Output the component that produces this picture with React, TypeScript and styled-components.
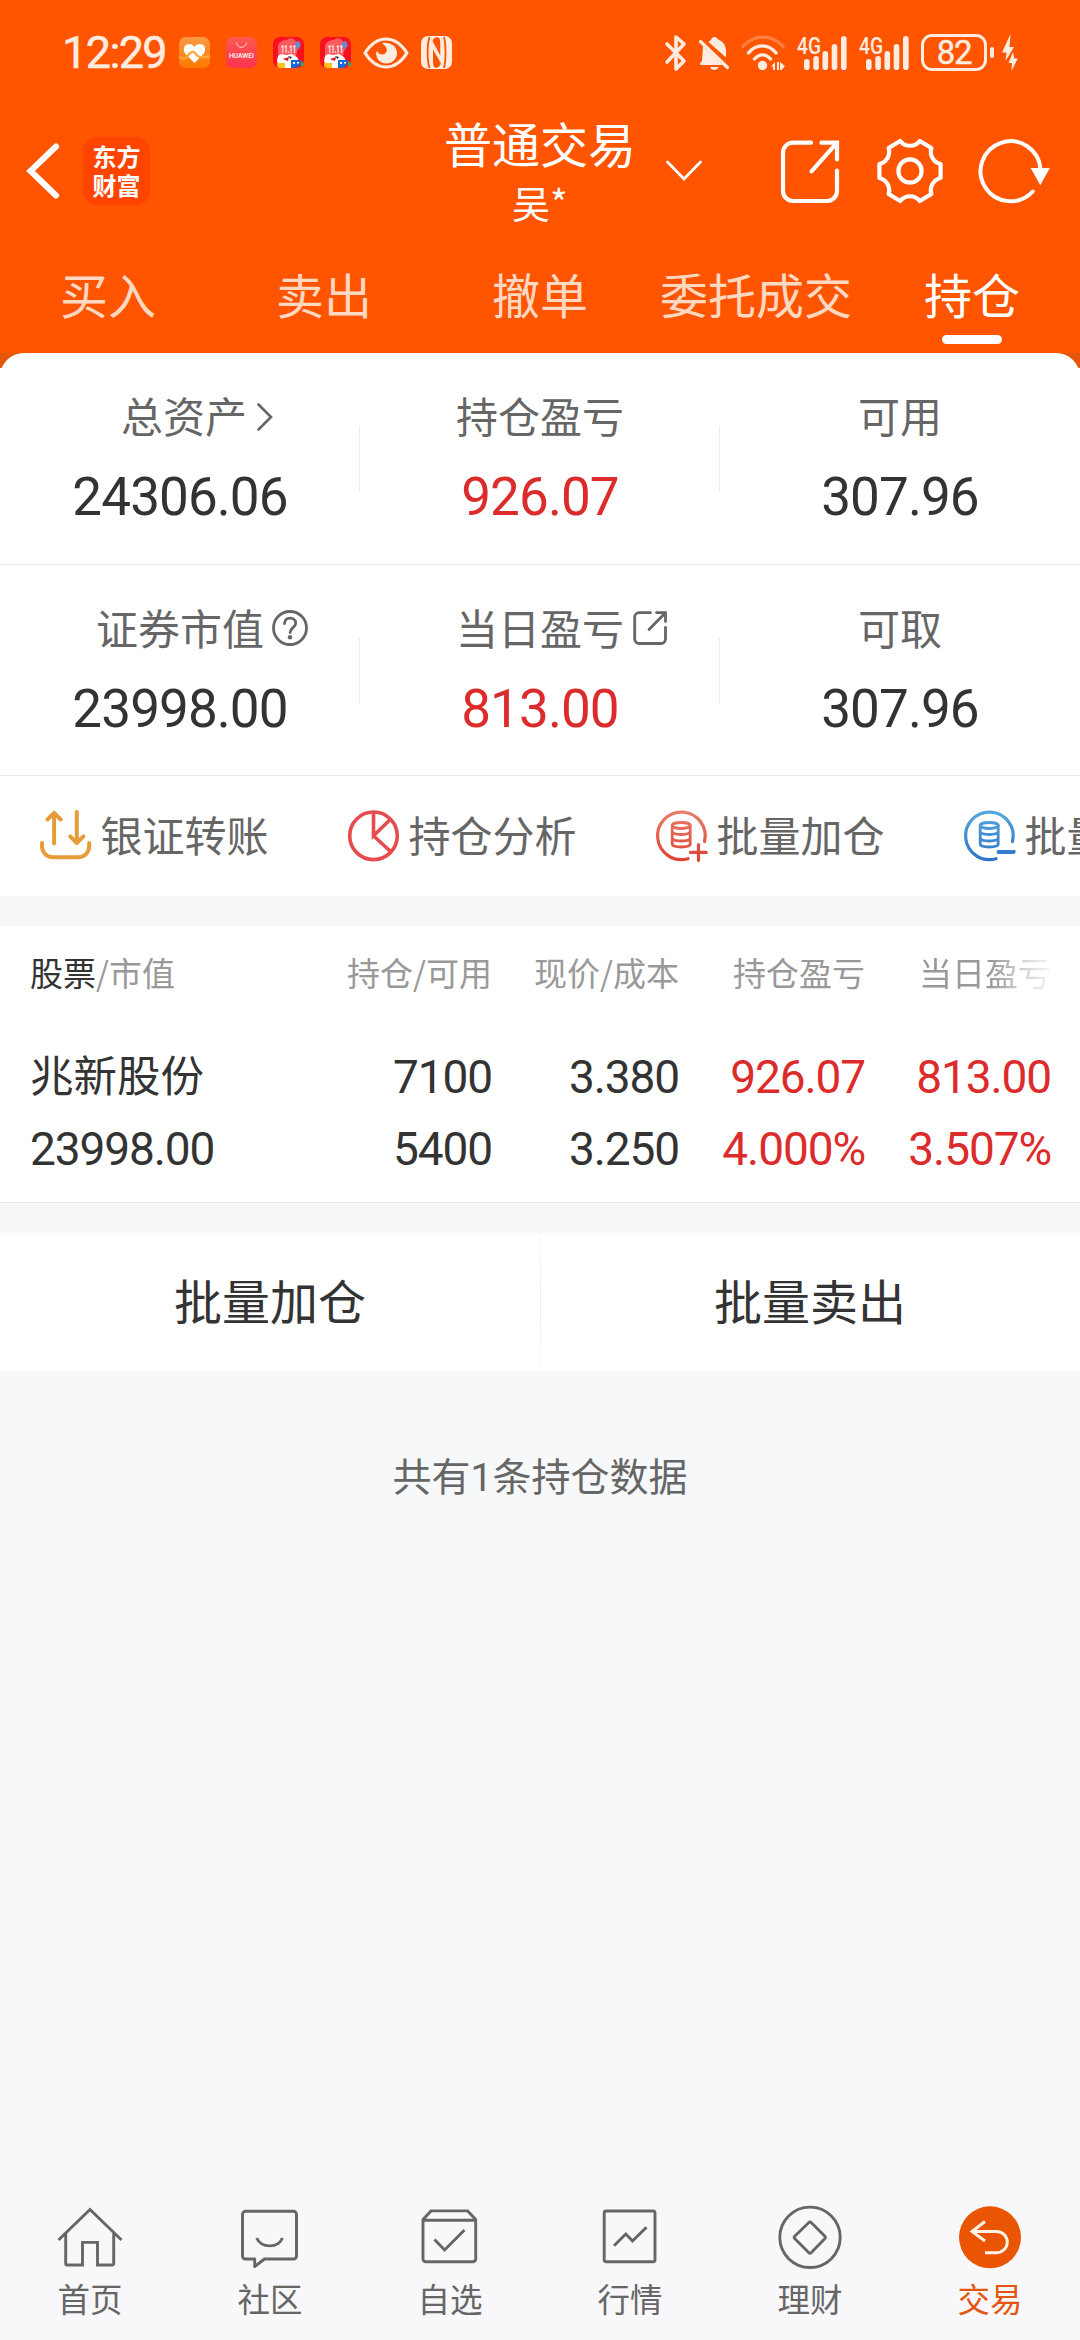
import React from "react";
import styled, { createGlobalStyle } from "styled-components";

const CJK = `"Noto Sans CJK SC", "Noto Sans", sans-serif`;
const NUM = `Roboto, "Noto Sans CJK SC", sans-serif`;
const ORANGE = "#ff5500";
const CREAM = "#ffece0";
const GREY = "#666666";
const DARK = "#333333";
const RED = "#dc2b2b";

const GlobalStyle = createGlobalStyle`
  *, *::before, *::after { box-sizing: border-box; }
  body { margin: 0; background: #f7f8fa; font-family: ${CJK}; }
  svg { display: block; flex: none; overflow: visible; }
`;

const Screen = styled.div`
  display: flex;
  flex-direction: column;
  width: 1080px;
  height: 2340px;
  overflow: hidden;
  background: #f7f8fa;
`;

/* ---------- header ---------- */
const Header = styled.header`
  background: ${ORANGE};
  height: 353px;
`;

const StatusBar = styled.div`
  display: flex;
  align-items: center;
  height: 100px;
  padding: 5px 62px 0;
`;

const Clock = styled.time`
  width: 117px;
  font: 400 45px/50px ${NUM};
  letter-spacing: -1.6px;
  color: ${CREAM};
  -webkit-text-stroke: 0.5px ${CREAM};
`;

const StatusApps = styled.div`
  display: flex;
  gap: 16px;
  margin-right: 12px;
`;

const StatusMarks = styled.div`
  display: flex;
  align-items: center;
  gap: 12px;
`;

const StatusRight = styled.div`
  display: flex;
  align-items: center;
  gap: 12px;
  margin-left: auto;
`;

const Signals = styled.div`
  display: flex;
  gap: 12px;
`;

const BatteryGroup = styled.div`
  display: flex;
  align-items: center;
`;

const BatteryBody = styled.div`
  width: 66px;
  height: 37px;
  border: 3px solid ${CREAM};
  border-radius: 11px;
  font: 400 33px/32px ${NUM};
  letter-spacing: -1.2px;
  text-align: center;
  color: ${CREAM};
  -webkit-text-stroke: 0.4px ${CREAM};
`;

const BatteryNub = styled.div`
  width: 4px;
  height: 11px;
  margin: 0 8px 0 3px;
  border-radius: 2px;
  background: ${CREAM};
`;

const AppBar = styled.div`
  display: grid;
  grid-template-columns: 1fr auto 1fr;
  align-items: center;
  height: 142px;
`;

const AppBarLeft = styled.div`
  display: flex;
  align-items: center;
  padding-left: 25px;
  gap: 22px;
`;

const Brand = styled.div`
  display: grid;
  place-content: center;
  width: 67px;
  height: 68px;
  padding-bottom: 3px;
  border-radius: 14px;
  background: #ff4400;
  color: #fff;
  font: 700 24px/29px ${CJK};
`;

const AccountTitle = styled.div`
  align-self: start;
  padding-top: 12px;
  text-align: center;
  color: #fff;
`;

const TitleText = styled.h1`
  margin: 0 0 5px;
  font: 400 48px/60px ${CJK};
`;

const AccountName = styled.div`
  font: 400 38px/50px ${CJK};
`;

const AppBarRight = styled.div`
  display: flex;
  align-items: center;
  padding-left: 30px;
`;

const ActionIcons = styled.div`
  display: flex;
  gap: 34px;
  margin-left: 75px;
`;

const Tabs = styled.nav`
  display: grid;
  grid-template-columns: repeat(5, 1fr);
`;

const Tab = styled.div<{ $active?: boolean }>`
  display: flex;
  flex-direction: column;
  align-items: center;
  gap: 12px;
  padding-top: 21px;
  font: 400 48px/60px ${CJK};
  color: ${(p) => (p.$active ? "#ffffff" : "#ffd8c2")};
  &::after {
    content: "";
    width: 60px;
    height: 9px;
    border-radius: 5px;
    background: ${(p) => (p.$active ? "#ffffff" : "transparent")};
  }
`;

/* ---------- assets ---------- */
const SheetBack = styled.div`
  background: linear-gradient(#e4560b 0 15px, #ffffff 15px);
`;

const Sheet = styled.section`
  border-radius: 24px 24px 0 0;
  background: #fff;
`;

const AssetRow = styled.div`
  display: grid;
  grid-template-columns: repeat(3, 1fr);
  height: 211.5px;
  border-bottom: 1px solid #ececec;
`;

const AssetCell = styled.div`
  display: flex;
  flex-direction: column;
  align-items: center;
  gap: 24px;
  padding-top: 34px;
  background: linear-gradient(#ececec, #ececec) no-repeat right 0 top 73px / 1px 66px;
  &:last-child { background: none; }
`;

const AssetLabel = styled.div<{ $shift?: number }>`
  display: flex;
  align-items: center;
  margin-left: ${(p) => p.$shift ?? 0}px;
  font: 400 42px/56px ${CJK};
  color: ${GREY};
`;

const HangingIcon = styled.span<{ $w: number; $gap: number }>`
  width: ${(p) => p.$w}px;
  padding-top: 3px;
  margin-left: ${(p) => p.$gap}px;
  margin-right: ${(p) => -(p.$w + p.$gap)}px;
`;

const AssetValue = styled.div<{ $red?: boolean }>`
  font: 400 53px/60px ${NUM};
  letter-spacing: -0.9px;
  color: ${(p) => (p.$red ? RED : DARK)};
`;

const Tools = styled.div`
  display: flex;
  gap: 79.5px;
  height: 120px;
  padding-left: 40px;
  overflow: hidden;
`;

const Tool = styled.div`
  display: flex;
  align-items: center;
  gap: 8.5px;
  flex: none;
`;

const ToolText = styled.span`
  padding-bottom: 5px;
  font: 400 42px/56px ${CJK};
  color: ${GREY};
  white-space: nowrap;
`;

/* ---------- holdings ---------- */
const Holdings = styled.section`
  height: 277px;
  margin-top: 30px;
  padding: 26px 0 0 30px;
  background: #fff;
  border-bottom: 1px solid #e9e9ea;
`;

const GridRow = styled.div`
  display: grid;
  grid-template-columns: 261px 201px 187px 186px 186px;
`;

const HeadRow = styled(GridRow)`
  margin-bottom: 49px;
  font: 400 33px/40px ${CJK};
  color: #999;
`;

const HeadCell = styled.div<{ $left?: boolean; $fade?: boolean }>`
  text-align: ${(p) => (p.$left ? "left" : "right")};
  white-space: nowrap;
  ${(p) => p.$fade && "mask-image: linear-gradient(to right, #000 68%, rgba(0,0,0,0.5) 82%, rgba(0,0,0,0.1) 100%);"}
`;

const HeadStrong = styled.span`
  color: ${DARK};
`;

const DataCell = styled.div<{ $left?: boolean; $red?: boolean }>`
  text-align: ${(p) => (p.$left ? "left" : "right")};
  font: 400 46px/72px ${NUM};
  letter-spacing: -1.1px;
  color: ${(p) => (p.$red ? RED : DARK)};
`;

const StockName = styled.div`
  margin-bottom: 6px;
  font: 400 43.5px/66px ${CJK};
  letter-spacing: 0;
`;

const BatchBar = styled.div`
  display: grid;
  grid-template-columns: 1fr 1fr;
  height: 138px;
  margin-top: 30px;
  background: linear-gradient(#fafafa, #ededed 50%, #fafafa) no-repeat center / 1px 100%, #fff;
`;

const BatchButton = styled.button`
  padding: 0 0 7px;
  border: 0;
  background: none;
  font: 400 48px/60px ${CJK};
  color: ${DARK};
`;

const Summary = styled.p`
  margin: 81px 0 0;
  text-align: center;
  font: 400 39px/52px ${NUM};
  color: ${GREY};
`;

/* ---------- bottom navigation ---------- */
const BottomNav = styled.nav`
  display: grid;
  grid-template-columns: repeat(6, 1fr);
  margin-top: auto;
  padding: 15px 0 22px;
  background: #f8f8fa;
`;

const NavItem = styled.div<{ $active?: boolean }>`
  display: flex;
  flex-direction: column;
  align-items: center;
  gap: 7px;
  font: 400 32.5px/40px ${CJK};
  color: ${(p) => (p.$active ? "#e4560f" : GREY)};
`;

/* ---------- status icons ---------- */
const HealthApp = () => (
  <svg width="31" height="31" viewBox="0 0 31 31">
    <defs>
      <linearGradient id="health" x1="0" y1="0" x2="0" y2="1">
        <stop offset="0" stopColor="#fb9a44" />
        <stop offset="1" stopColor="#ff7a00" />
      </linearGradient>
    </defs>
    <rect width="31" height="31" rx="7" fill="url(#health)" />
    <path d="M15.500 26L6.500 17C3 12 5.500 7 10 7c2.600 0 4.500 1.300 5.500 3 1-1.700 3-3 5.500-3 4.500 0 7 5 3.500 10z" fill="#fff" />
    <path d="M0 19.500c4 3.500 7 2.500 9-1s6-5 8-1.500 6 4.500 14 2" fill="none" stroke="#ffa838" strokeWidth="2.400" />
  </svg>
);

const HuaweiApp = () => (
  <svg width="31" height="31" viewBox="0 0 31 31">
    <defs>
      <linearGradient id="mall" x1="0" y1="0" x2="0" y2="1">
        <stop offset="0" stopColor="#ff5a50" />
        <stop offset="1" stopColor="#fb3350" />
      </linearGradient>
    </defs>
    <rect width="31" height="31" rx="7" fill="url(#mall)" />
    <path d="M10.500 5.500c1 6.500 9 6.500 10 0" fill="none" stroke="#ffd9d6" strokeWidth="1" />
    <text x="3" y="20.500" textLength="25" lengthAdjust="spacingAndGlyphs" fill="#fff" fontFamily="Roboto, sans-serif" fontWeight="500" fontSize="6.500">HUAWEI</text>
  </svg>
);

const SaleApp = () => (
  <svg width="31" height="31" viewBox="0 0 31 31">
    <rect width="31" height="31" rx="7" fill="#f9101f" />
    <path d="M5 9c1-5 6-6 9-6 2-3 8-2 9 2l2 6-2 8H5z" fill="#ff5a5e" />
    <path d="M22 5l4-1 2 4-3 5-3-2z" fill="#6f86c9" />
    <text x="8" y="16" textLength="15" lengthAdjust="spacingAndGlyphs" fill="#fff" fontFamily="Roboto, sans-serif" fontWeight="700" fontSize="10.500">11.11</text>
    <path d="M4 24l1-5 3-2 5 1 6-1 5 3 2 4-4 7H7z" fill="#fff" />
    <path d="M10 22l6-2-1 4-3-1z" fill="#d81b2b" />
    <path d="M15 19l4 1-1.500 2z" fill="#222" />
    <path d="M4 26h8v5H7c-2 0-3-1-3-3z" fill="#ffc21a" />
    <path d="M18 23h10l-1 5-4 3h-5z" fill="#1769d8" />
    <path d="M20 25h2v2h-2zM24 25h2v1.500h-2z" fill="#fff" />
    <path d="M28 24l3 2v2l-3 2z" fill="#2faa55" />
  </svg>
);

const EyeIcon = () => (
  <svg width="46" height="32" viewBox="0 0 46 32">
    <path d="M2 16C8 6.500 15 2 23 2s15 4.500 21 14c-6 9.500-13 14-21 14S8 25.500 2 16z" fill="none" stroke={CREAM} strokeWidth="3.200" strokeLinejoin="round" />
    <path d="M19 6c8-1.500 15 3 15 10 0 6-4.700 10.500-10.700 10.500-6 0-10-4.500-10.300-10.500l1-2c2 4 6 4.500 8.500 2C25.500 13 23 9 19 6z" fill={CREAM} />
  </svg>
);

const NfcIcon = () => (
  <svg width="31" height="33" viewBox="0 0 31 33">
    <rect width="31" height="33" rx="7" fill={CREAM} />
    <path d="M8.500 1C6 9 6 24 8.500 32M23 1c2 8 2 23 0 31" fill="none" stroke={ORANGE} strokeWidth="1.800" />
    <path d="M12 13.500L20 27.500C18.500 31.500 15.500 32.500 13 31 12 29 12 26 12 23zM19.300 19.500L11.500 5C13 1 16 .5 18.300 2c1 2 1 5 1 8z" fill={ORANGE} />
  </svg>
);

const BluetoothIcon = () => (
  <svg width="22" height="36" viewBox="0 0 22 36">
    <path d="M2 9l17 17-8 8V2l8 7L2 27" fill="none" stroke={CREAM} strokeWidth="3.600" strokeLinejoin="round" strokeLinecap="round" />
  </svg>
);

const MutedBellIcon = () => (
  <svg width="30" height="36" viewBox="0 0 30 36">
    <path d="M4 11L24 30H1.500c-1-1.500 0-2.500 1.500-4zM9.500 7c1-1 1.700-1.500 2.500-2 .5-3.500 5.500-4 6.500-1 6 2.500 8.500 7 8.500 12v6.500zM11 32h8.500c-1 4-7.500 4-8.500 0z" fill={CREAM} />
    <path d="M1.500 6.500l27 26" stroke={CREAM} strokeWidth="3.200" strokeLinecap="round" />
  </svg>
);

const WifiIcon = () => (
  <svg width="44" height="36" viewBox="0 0 44 36">
    <g fill="none" strokeLinecap="round" strokeWidth="3.400">
      <path d="M2 11.500C13-1 31-1 42 11.500" stroke="#ff7f42" />
      <path d="M7.500 18c7.500-9.500 20-9.500 27.500 0M13.500 24c4.500-5.500 11.500-5.500 16 0" stroke={CREAM} />
    </g>
    <circle cx="21.500" cy="30.500" r="4.700" fill={CREAM} />
    <path d="M30 31.500l4-4.500v8h-2v-3.500zM36 27h2v8h-2zM39 27l5 4-3.500 4H39z" fill={CREAM} />
  </svg>
);

const SignalIcon = () => (
  <svg width="50" height="36" viewBox="0 0 50 36">
    <text x="0" y="18.500" textLength="24" lengthAdjust="spacingAndGlyphs" fill={CREAM} fontFamily="Roboto, sans-serif" fontWeight="500" fontSize="24">4G</text>
    <g fill={CREAM}>
      <rect x="7" y="24" width="5.600" height="11" rx="2.800" />
      <rect x="16.300" y="21" width="5.600" height="14" rx="2.800" />
      <rect x="25.500" y="16" width="5.600" height="19" rx="2.800" />
      <rect x="34.700" y="9" width="5.600" height="26" rx="2.800" />
      <rect x="44" y="1" width="5.600" height="34" rx="2.800" />
    </g>
  </svg>
);

const ChargeIcon = () => (
  <svg width="16" height="37" viewBox="0 0 16 37">
    <path d="M8.500 0L0 18.500h4.500L3.500 27 12 13H7.500zM11 18l-4.500 11h3.500L9.500 37 15.800 24.500h-3.500z" fill={CREAM} />
  </svg>
);

/* ---------- app bar icons ---------- */
const BackIcon = () => (
  <svg width="36" height="58" viewBox="0 0 36 58">
    <path d="M31 4.500L5.500 29 31 53.500" fill="none" stroke="#fff" strokeWidth="6" strokeLinecap="round" strokeLinejoin="miter" />
  </svg>
);

const DownIcon = () => (
  <svg width="36" height="22" viewBox="0 0 36 22">
    <path d="M1.500 2L18 19 34.500 2" fill="none" stroke="#fff" strokeWidth="2.800" strokeLinecap="round" />
  </svg>
);

const ShareIcon = () => (
  <svg width="66" height="66" viewBox="0 0 66 66" fill="none" stroke="#fff" strokeWidth="4.200" strokeLinecap="round">
    <path d="M34 4.700H16a10 10 0 0 0-10 10V53a10 10 0 0 0 10 10h34a10 10 0 0 0 10-10V32.500" />
    <path d="M44.500 4.700H60V21.500M60 4.700L34.500 33.300" />
  </svg>
);

const GearIcon = () => (
  <svg width="66" height="66" viewBox="0 0 66 66" fill="none" stroke="#fff" strokeWidth="4.200" strokeLinejoin="round">
    <path d="M63.600 26V40A12.500 12.500 0 0 0 54.400 56L42.800 63A12.500 12.500 0 0 0 23.200 63L11.600 56A12.500 12.500 0 0 0 2.400 40V26A12.500 12.500 0 0 0 11.600 10L23.200 3A12.500 12.500 0 0 0 42.800 3L54.400 10A12.500 12.500 0 0 0 63.600 26Z" />
    <circle cx="33" cy="33" r="11.600" />
  </svg>
);

const RefreshIcon = () => (
  <svg width="74" height="66" viewBox="0 0 74 66">
    <path d="M55.700 53.500A30 30 0 1 1 63.500 31" fill="none" stroke="#fff" strokeWidth="4" strokeLinecap="round" />
    <path d="M53.700 30H72.800L63.300 47.200z" fill="#fff" />
  </svg>
);

/* ---------- asset icons ---------- */
const ArrowRight = () => (
  <svg width="16" height="30" viewBox="0 0 16 30">
    <path d="M1.500 2.500L14 15 1.500 27.500" fill="none" stroke={GREY} strokeWidth="2.600" strokeLinecap="round" />
  </svg>
);

const HelpIcon = () => (
  <svg width="36" height="36" viewBox="0 0 36 36" fill="none" stroke={GREY} strokeWidth="2.800" strokeLinecap="round">
    <circle cx="18" cy="18" r="16.500" />
    <path d="M12.500 13.500c.3-3.600 2.500-5.300 5.600-5.300 3.200 0 5.600 2 5.600 5 0 4.300-5.600 4.600-5.600 9.300" />
    <circle cx="18" cy="27.300" r="2.200" fill={GREY} stroke="none" />
  </svg>
);

const SmallShareIcon = () => (
  <svg width="34" height="35" viewBox="0 0 34 35" fill="none" stroke={GREY} strokeWidth="2.800" strokeLinecap="round">
    <path d="M17.500 1.700H6.200a4.500 4.500 0 0 0-4.500 4.500V28a4.500 4.500 0 0 0 4.500 4.500h21.800a4.500 4.500 0 0 0 4.500-4.500V16.500" />
    <path d="M23.500 1.700h9V10.500M32.500 1.700L16 18.500" />
  </svg>
);

/* ---------- tool icons ---------- */
const TransferIcon = () => (
  <svg width="52" height="52" viewBox="0 0 52 52" fill="none" stroke="#e79c3c" strokeWidth="4" strokeLinecap="round" strokeLinejoin="round">
    <path d="M2 33v3.300a11 11 0 0 0 11 11h25.200a11 11 0 0 0 11-11V33" />
    <path d="M14.100 33.500V3M7.500 9.500l6.600-6.700 6.600 6.700M36.800 2v31M30.200 26.300l6.600 6.700 6.600-6.700" />
  </svg>
);

const PieIcon = () => (
  <svg width="52" height="52" viewBox="0 0 52 52" fill="none" stroke="#e64b4d" strokeWidth="3.600">
    <circle cx="25.500" cy="25.800" r="23.800" />
    <path d="M25.500 2v23.800L42.300 9.500M25.500 25.800l17.300 16" />
  </svg>
);

const CoinsIcon = ({ kind }: { kind: "plus" | "minus" }) => {
  const id = `coins-${kind}`;
  const [from, to] = kind === "plus" ? ["#e8806c", "#e0402f"] : ["#56aade", "#2c72c8"];
  return (
    <svg width="52" height="52" viewBox="0 0 52 52" fill="none" stroke={`url(#${id})`} strokeWidth="3.200" strokeLinecap="round">
      <defs>
        <linearGradient id={id} gradientUnits="userSpaceOnUse" x1="0" y1="0" x2="0" y2="52">
          <stop offset="0" stopColor={from} />
          <stop offset="1" stopColor={to} />
        </linearGradient>
      </defs>
      <path d="M48.500 31.500A23.800 23.800 0 1 0 32 48.700" />
      <g strokeWidth="2.800">
        <ellipse cx="25.200" cy="15.500" rx="9" ry="3" />
        <path d="M16.200 15.500V34c0 4 18 4 18 0V15.500M16.200 21.500c0 4 18 4 18 0M16.200 28c0 4 18 4 18 0" />
      </g>
      {kind === "plus" ? (
        <path d="M34.500 42.400h15.800M42.500 34.500v15.800" />
      ) : (
        <path d="M34.500 42h15v.01" strokeWidth="4" />
      )}
    </svg>
  );
};

/* ---------- navigation icons ---------- */
const NavSvg = styled.svg.attrs({ width: 66, height: 66, viewBox: "0 0 66 66" })`
  fill: none;
  stroke: ${GREY};
  stroke-width: 2.9px;
`;

const HomeIcon = () => (
  <NavSvg>
    <path d="M1.500 35L33 4.500 64.500 35M8.700 28V58.500a1.500 1.500 0 0 0 1.500 1.500H25.500V37.400H40.500V60H55.200a1.500 1.500 0 0 0 1.500-1.500V28" />
  </NavSvg>
);

const ChatIcon = () => (
  <NavSvg strokeLinejoin="round">
    <path d="M8.500 6.300H56.500a3 3 0 0 1 3 3V51a3 3 0 0 1-3 3H27.500L17.700 61.500V54H8.500a3 3 0 0 1-3-3V9.300a3 3 0 0 1 3-3z" />
    <path d="M19.700 33C24.500 43.500 41 43.500 45.500 33" />
  </NavSvg>
);

const BoxIcon = () => (
  <NavSvg>
    <path d="M6 14.500L14 5.900H50.700L58.700 14.500V54a2.800 2.800 0 0 1-2.800 2.800H8.800A2.800 2.800 0 0 1 6 54zM6 15.200H58.700M17.500 34.500L27.600 45 47.500 25" />
  </NavSvg>
);

const ChartIcon = () => (
  <NavSvg>
    <rect x="7.200" y="6" width="50.800" height="50.800" rx="2" />
    <path d="M17 40.700L28.800 29 35.500 36 49.500 22.200" />
  </NavSvg>
);

const WealthIcon = () => (
  <NavSvg strokeLinejoin="round">
    <circle cx="33" cy="32.300" r="30.200" />
    <path d="M31.600 17.800a2 2 0 0 1 2.800 0L47.700 31a2 2 0 0 1 0 2.800L34.400 47.500a2 2 0 0 1-2.800 0L17.900 33.800a2 2 0 0 1 0-2.800z" />
  </NavSvg>
);

const TradeIcon = () => (
  <NavSvg>
    <circle cx="33" cy="32.300" r="31" fill="#ea5504" stroke="none" />
    <path d="M28 16.500L15 26.500 28 36M15 26.500H39.700a10.600 10.600 0 0 1 0 21.200H28" stroke="#fff3e6" />
  </NavSvg>
);

/* ---------- data ---------- */
const tabs = ["买入", "卖出", "撤单", "委托成交", "持仓"];

const assets = [
  [
    { label: "总资产", value: "24306.06", shift: 8, icon: <ArrowRight />, w: 16, gap: 10 },
    { label: "持仓盈亏", value: "926.07", red: true },
    { label: "可用", value: "307.96" },
  ],
  [
    { label: "证券市值", value: "23998.00", icon: <HelpIcon />, w: 36, gap: 8 },
    { label: "当日盈亏", value: "813.00", red: true, icon: <SmallShareIcon />, w: 34, gap: 9 },
    { label: "可取", value: "307.96" },
  ],
];

const tools = [
  { label: "银证转账", icon: <TransferIcon /> },
  { label: "持仓分析", icon: <PieIcon /> },
  { label: "批量加仓", icon: <CoinsIcon kind="plus" /> },
  { label: "批量卖出", icon: <CoinsIcon kind="minus" /> },
];

const columns = [
  { top: "7100", bottom: "5400" },
  { top: "3.380", bottom: "3.250" },
  { top: "926.07", bottom: "4.000%", red: true },
  { top: "813.00", bottom: "3.507%", red: true },
];

const navItems = [
  { label: "首页", icon: <HomeIcon /> },
  { label: "社区", icon: <ChatIcon /> },
  { label: "自选", icon: <BoxIcon /> },
  { label: "行情", icon: <ChartIcon /> },
  { label: "理财", icon: <WealthIcon /> },
  { label: "交易", icon: <TradeIcon />, active: true },
];

export default function App() {
  return (
    <Screen>
      <GlobalStyle />
      <Header>
        <StatusBar>
          <Clock>12:29</Clock>
          <StatusApps>
            <HealthApp />
            <HuaweiApp />
            <SaleApp />
            <SaleApp />
          </StatusApps>
          <StatusMarks>
            <EyeIcon />
            <NfcIcon />
          </StatusMarks>
          <StatusRight>
            <BluetoothIcon />
            <MutedBellIcon />
            <WifiIcon />
            <Signals>
              <SignalIcon />
              <SignalIcon />
            </Signals>
            <BatteryGroup>
              <BatteryBody>82</BatteryBody>
              <BatteryNub />
              <ChargeIcon />
            </BatteryGroup>
          </StatusRight>
        </StatusBar>
        <AppBar>
          <AppBarLeft>
            <BackIcon />
            <Brand>
              <span>东方</span>
              <span>财富</span>
            </Brand>
          </AppBarLeft>
          <AccountTitle>
            <TitleText>普通交易</TitleText>
            <AccountName>吴*</AccountName>
          </AccountTitle>
          <AppBarRight>
            <DownIcon />
            <ActionIcons>
              <ShareIcon />
              <GearIcon />
              <RefreshIcon />
            </ActionIcons>
          </AppBarRight>
        </AppBar>
        <Tabs>
          {tabs.map((t) => (
            <Tab key={t} $active={t === "持仓"}>{t}</Tab>
          ))}
        </Tabs>
      </Header>

      <SheetBack>
        <Sheet>
          {assets.map((row, i) => (
            <AssetRow key={i}>
              {row.map((a: any) => (
                <AssetCell key={a.label}>
                  <AssetLabel $shift={a.shift}>
                    {a.label}
                    {a.icon && <HangingIcon $w={a.w} $gap={a.gap}>{a.icon}</HangingIcon>}
                  </AssetLabel>
                  <AssetValue $red={a.red}>{a.value}</AssetValue>
                </AssetCell>
              ))}
            </AssetRow>
          ))}
          <Tools>
            {tools.map((t) => (
              <Tool key={t.label}>
                {t.icon}
                <ToolText>{t.label}</ToolText>
              </Tool>
            ))}
          </Tools>
        </Sheet>
      </SheetBack>

      <Holdings>
        <HeadRow>
          <HeadCell $left>
            <HeadStrong>股票</HeadStrong>/市值
          </HeadCell>
          <HeadCell>持仓/可用</HeadCell>
          <HeadCell>现价/成本</HeadCell>
          <HeadCell>持仓盈亏</HeadCell>
          <HeadCell $fade>当日盈亏</HeadCell>
        </HeadRow>
        <GridRow>
          <DataCell $left>
            <StockName>兆新股份</StockName>
            <div>23998.00</div>
          </DataCell>
          {columns.map((c) => (
            <DataCell key={c.top} $red={c.red}>
              <div>{c.top}</div>
              <div>{c.bottom}</div>
            </DataCell>
          ))}
        </GridRow>
      </Holdings>

      <BatchBar>
        <BatchButton>批量加仓</BatchButton>
        <BatchButton>批量卖出</BatchButton>
      </BatchBar>

      <Summary>共有1条持仓数据</Summary>

      <BottomNav>
        {navItems.map((n) => (
          <NavItem key={n.label} $active={n.active}>
            {n.icon}
            {n.label}
          </NavItem>
        ))}
      </BottomNav>
    </Screen>
  );
}
